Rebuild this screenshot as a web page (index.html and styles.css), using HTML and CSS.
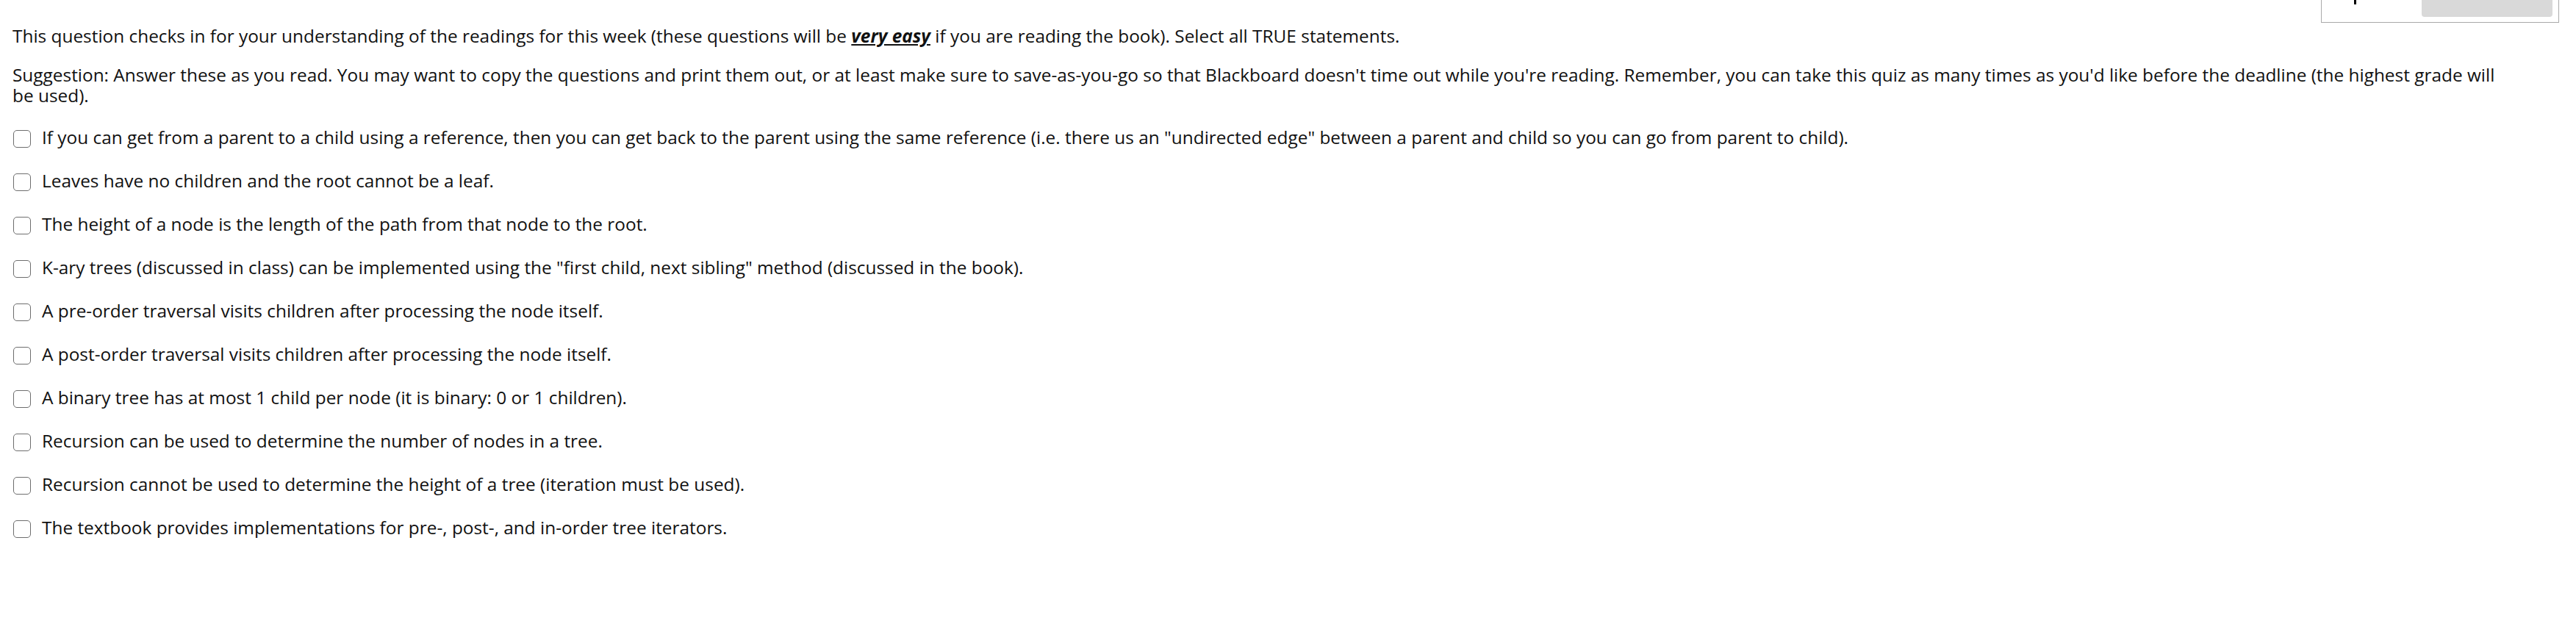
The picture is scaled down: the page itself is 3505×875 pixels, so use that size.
FILE: index.html
```html
<!DOCTYPE html>
<html>
<head>
<meta charset="utf-8">
<title>Question</title>
<link rel="stylesheet" href="styles.css">
</head>
<body>
<div class="toolbox">
<span class="caret"></span>
<span class="toolbox-btn"></span>
</div>

<div class="question">
<p class="lead">This question checks in for your understanding of the readings for this week (these questions will be <b><i><u>very easy</u></i></b> if you are reading the book). Select all TRUE statements.</p>

<p class="lead">Suggestion: Answer these as you read. You may want to copy the questions and print them out, or at least make sure to save-as-you-go so that Blackboard doesn't time out while you're reading. Remember, you can take this quiz as many times as you'd like before the deadline (the highest grade will be used).</p>

<ul class="answers">
<li><label><input type="checkbox"><span class="box"></span>If you can get from a parent to a child using a reference, then you can get back to the parent using the same reference (i.e. there us an "undirected edge" between a parent and child so you can go from parent to child).</label></li>
<li><label><input type="checkbox"><span class="box"></span>Leaves have no children and the root cannot be a leaf.</label></li>
<li><label><input type="checkbox"><span class="box"></span>The height of a node is the length of the path from that node to the root.</label></li>
<li><label><input type="checkbox"><span class="box"></span>K-ary trees (discussed in class) can be implemented using the "first child, next sibling" method (discussed in the book).</label></li>
<li><label><input type="checkbox"><span class="box"></span>A pre-order traversal visits children after processing the node itself.</label></li>
<li><label><input type="checkbox"><span class="box"></span>A post-order traversal visits children after processing the node itself.</label></li>
<li><label><input type="checkbox"><span class="box"></span>A binary tree has at most 1 child per node (it is binary: 0 or 1 children).</label></li>
<li><label><input type="checkbox"><span class="box"></span>Recursion can be used to determine the number of nodes in a tree.</label></li>
<li><label><input type="checkbox"><span class="box"></span>Recursion cannot be used to determine the height of a tree (iteration must be used).</label></li>
<li><label><input type="checkbox"><span class="box"></span>The textbook provides implementations for pre-, post-, and in-order tree iterators.</label></li>
</ul>
</div>
</body>
</html>
```

FILE: styles.css
```css
/* Quiz question page */

body
{ margin: 0;
  background: #fff;
  color: #111;
  font-family: "Open Sans", "Liberation Sans", sans-serif;
  font-size: 24.4px;
  line-height: 28px;
}

div.question
{ width: 3395px;
  padding: 35px 0 0 17px;
}

p.lead
{ margin: 0 0 25px 0;
}

p.lead + p.lead
{ margin-bottom: 29px;
}

/* Answers */

ul.answers
{ list-style: none;
  margin: 0;
  padding: 0;
  display: flex;
  flex-direction: column;
  gap: 31px;
}

ul.answers label
{ display: flex;
  align-items: center;
  gap: 15px;
}

ul.answers input
{ display: none;
}

span.box
{ flex: none;
  width: 22px;
  height: 22px;
  margin: 3px 0 0 1px;
  border: 1px solid #6e6e6e;
  border-radius: 5px;
  background: #fff;
}

/* Floating tool box, cut at the top of the window */

div.toolbox
{ position: absolute;
  top: -20px;
  left: 3158px;
  width: 322px;
  height: 49px;
  border: 1px solid #aaa;
  background: #fff;
}

span.caret
{ position: absolute;
  left: 44px;
  top: 19px;
  width: 3px;
  height: 6px;
  background: #000;
}

span.toolbox-btn
{ position: absolute;
  left: 136px;
  top: 0;
  width: 178px;
  height: 42px;
  border-radius: 4px;
  background: #d9d9d9;
}
```
